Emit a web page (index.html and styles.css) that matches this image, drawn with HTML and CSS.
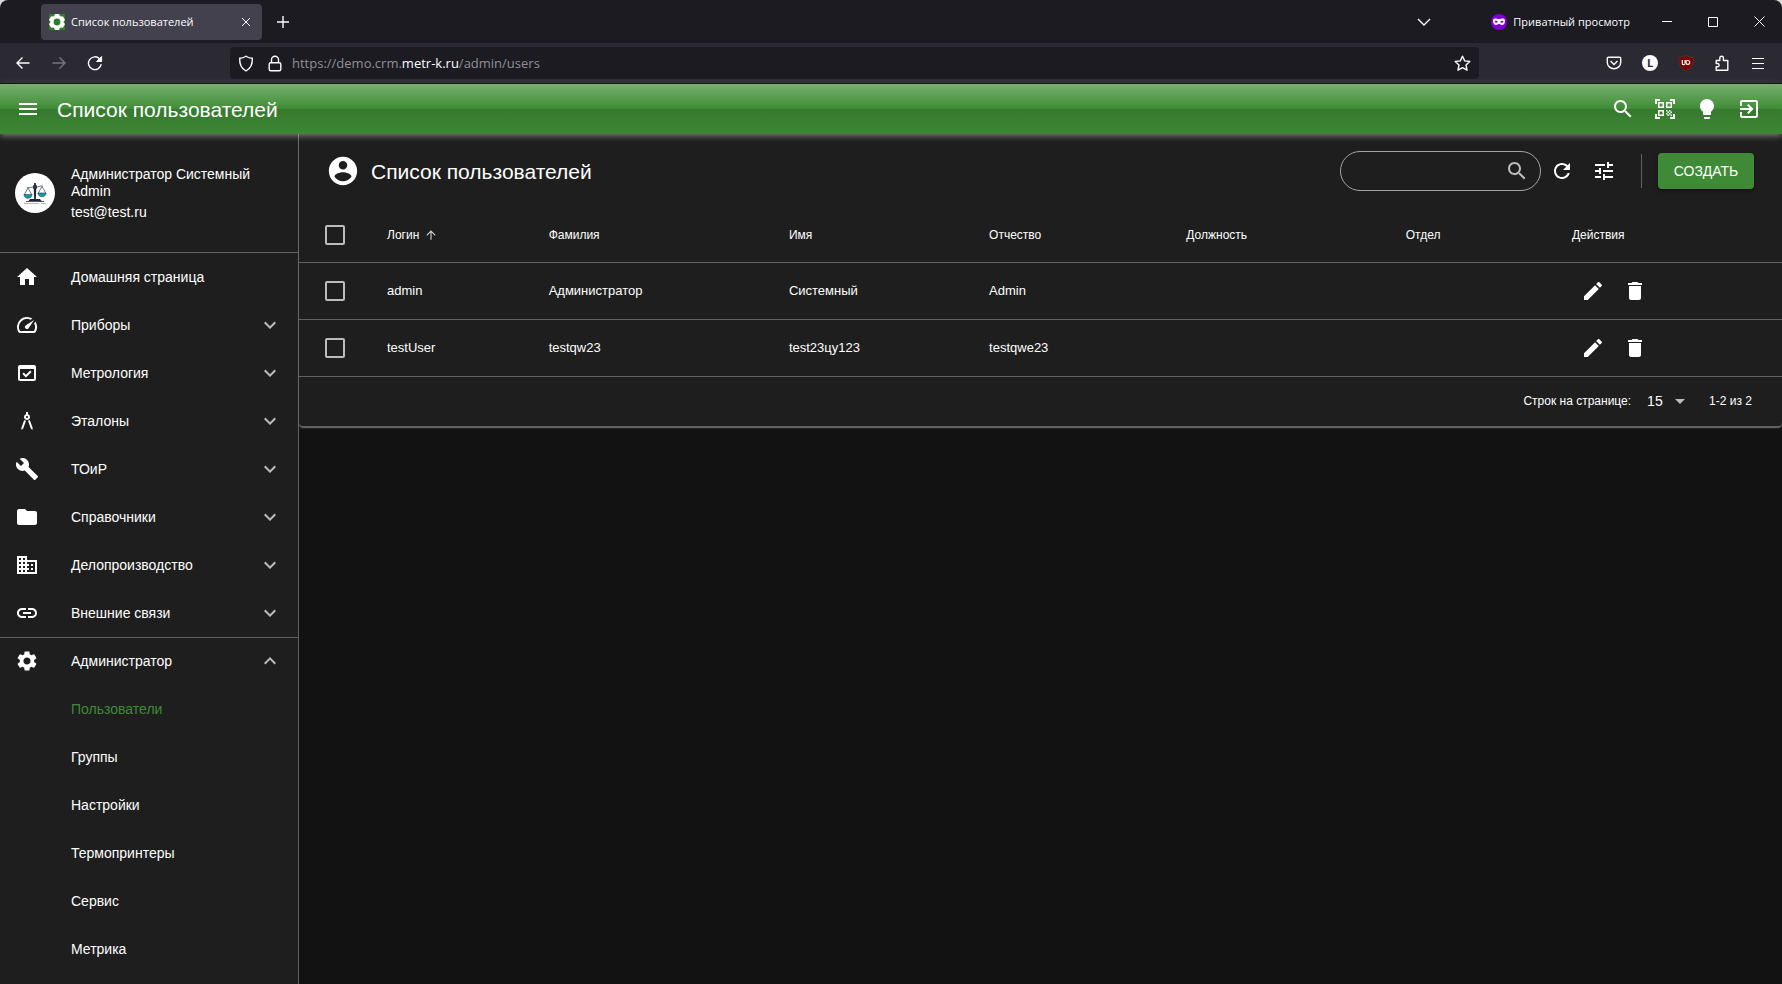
FILE: index.html
```html
<!DOCTYPE html>
<html lang="ru">
<head>
<meta charset="utf-8">
<title>Список пользователей</title>
<link rel="stylesheet" href="styles.css">
</head>
<body>
<svg class="sprite" aria-hidden="true">
  <symbol id="i-search" viewBox="0 0 24 24"><path d="M15.5 14h-.79l-.28-.27C15.41 12.59 16 11.11 16 9.5 16 5.91 13.09 3 9.5 3S3 5.91 3 9.5 5.91 16 9.5 16c1.61 0 3.09-.59 4.23-1.57l.27.28v.79l5 4.99L20.49 19l-4.99-5zm-6 0C7.01 14 5 11.99 5 9.5S7.01 5 9.5 5 14 7.01 14 9.5 11.99 14 9.5 14z"/></symbol>
  <symbol id="i-more" viewBox="0 0 24 24"><path d="M16.59 8.59L12 13.17 7.41 8.59 6 10l6 6 6-6z"/></symbol>
  <symbol id="i-less" viewBox="0 0 24 24"><path d="M12 8l-6 6 1.41 1.41L12 10.83l4.59 4.58L18 14z"/></symbol>
  <symbol id="i-edit" viewBox="0 0 24 24"><path d="M3 17.25V21h3.75L17.81 9.94l-3.75-3.75L3 17.25zM20.71 7.04c.39-.39.39-1.02 0-1.41l-2.34-2.34c-.39-.39-1.02-.39-1.41 0l-1.83 1.83 3.75 3.75 1.83-1.83z"/></symbol>
  <symbol id="i-delete" viewBox="0 0 24 24"><path d="M6 19c0 1.1.9 2 2 2h8c1.1 0 2-.9 2-2V7H6v12zM19 4h-3.5l-1-1h-5l-1 1H5v2h14V4z"/></symbol>
</svg>

<div class="browser">
  <div class="tabbar">
    <div class="tab">
      <svg class="favicon" viewBox="0 0 16 16"><rect width="16" height="16" fill="#2f7d2c"/><g fill="#fff"><circle cx="8" cy="8" r="6.8"/><rect x="5.500" y="0" width="5" height="16" rx="1"/><rect x="5.500" y="0" width="5" height="16" rx="1" transform="rotate(60 8 8)"/><rect x="5.500" y="0" width="5" height="16" rx="1" transform="rotate(120 8 8)"/></g><circle cx="8" cy="8" r="3.400" fill="#2f7d2c"/></svg>
      <span class="tab-title">Список пользователей</span>
      <button class="tab-close" aria-label="Закрыть вкладку"><svg class="line" width="10" height="10" viewBox="0 0 10 10"><path d="M1 1l8 8M9 1L1 9"/></svg></button>
    </div>
    <button class="chrome-btn" aria-label="Новая вкладка"><svg class="line bold" width="14" height="14" viewBox="0 0 14 14"><path d="M7 1v12M1 7h12"/></svg></button>
    <button class="chrome-btn tabs-list" aria-label="Список вкладок"><svg class="line bold" width="14" height="14" viewBox="0 0 14 14"><path d="M1 4L7 10 13 4"/></svg></button>
    <div class="private">
      <svg width="16" height="16" viewBox="0 0 16 16"><circle cx="8" cy="8" r="8" fill="#8000d7"/><path fill="#fff" fill-rule="evenodd" d="M2 6.500C2 5 3.500 4.500 5 4.600 6.500 4.700 7 5.300 8 5.300S9.500 4.700 11 4.600c1.500-.1 3 .4 3 1.900 0 2.500-1 4.500-3 4.500-1.500 0-2-1.300-3-1.300S6.500 11 5 11C3 11 2 9 2 6.500zM5.200 6.700C4.300 6.700 3.800 7.300 3.500 7.800c.5.600 1 .9 1.700.9.800 0 1.300-.5 1.500-1-.3-.6-.7-1-1.500-1zm5.600 0c-.8 0-1.200.4-1.500 1 .2.500.7 1 1.500 1 .7 0 1.200-.3 1.700-.9-.3-.5-.8-1.100-1.700-1.100z"/></svg>
      <span>Приватный просмотр</span>
    </div>
    <button class="win-btn" aria-label="Свернуть"><svg class="line" width="10" height="11" viewBox="0 0 10 11"><path d="M0 5.500h10"/></svg></button>
    <button class="win-btn" aria-label="Развернуть"><svg class="line" width="10" height="10" viewBox="0 0 10 10"><path d="M.5.5h9v9h-9z"/></svg></button>
    <button class="win-btn" aria-label="Закрыть"><svg class="line" width="11" height="11" viewBox="0 0 11 11"><path d="M.5.500l10 10M10.500.5l-10 10"/></svg></button>
  </div>
  <div class="toolbar">
    <button class="chrome-btn" aria-label="Назад"><svg class="line bold" width="16" height="16" viewBox="0 0 16 16"><path d="M14.500 8H2M7.500 2.500L2 8l5.500 5.500"/></svg></button>
    <button class="chrome-btn dim" aria-label="Вперёд"><svg class="line bold" width="16" height="16" viewBox="0 0 16 16"><path d="M1.500 8H14M8.500 2.500L14 8l-5.500 5.500"/></svg></button>
    <button class="chrome-btn" aria-label="Обновить"><svg class="line bold" width="16" height="16" viewBox="0 0 16 16"><path d="M14.200 9.200A6.400 6.400 0 1 1 12.600 3.900"/><path d="M14.600 1.500v5h-5z" fill="currentColor" stroke-width="1"/></svg></button>
    <div class="toolbar-gap"></div>
    <div class="urlbar">
      <svg class="line bold" width="16" height="17" viewBox="0 0 16 17"><path d="M8 1.200C6 2.600 4 3.200 1.700 3.300 1.400 9 3.200 13.500 8 16c4.800-2.500 6.600-7 6.300-12.700C12 3.200 10 2.600 8 1.200z"/></svg>
      <svg class="line bold" width="16" height="17" viewBox="0 0 16 17"><rect x="2.200" y="7.700" width="11.600" height="8" rx="1.500"/><path d="M4.500 7.500V4.700a3.500 3.500 0 0 1 7 0v2.800"/></svg>
      <span class="url">https://demo.crm.<b>metr-k.ru</b>/admin/users</span>
      <svg class="line bold" width="17" height="17" viewBox="0 0 17 17"><path stroke-linejoin="round" d="M8.500 1.200l2.200 4.700 5.100.6-3.800 3.500 1 5.200-4.500-2.600L4 15.200 5 10 1.200 6.500l5.100-.6z"/></svg>
    </div>
    <div class="toolbar-gap"></div>
    <button class="chrome-btn" aria-label="Pocket"><svg class="line bold" width="16" height="16" viewBox="0 0 16 16"><path d="M2.500 2.200h11a1.200 1.200 0 0 1 1.200 1.200V7.500a6.700 6.200 0 0 1-13.400 0V3.400A1.200 1.200 0 0 1 2.500 2.200z"/><path d="M4.500 6L8 9.400 11.500 6"/></svg></button>
    <button class="chrome-btn" aria-label="Расширение L"><span class="ext-l">L</span></button>
    <button class="chrome-btn" aria-label="uBlock Origin"><svg width="16" height="16" viewBox="0 0 16 16"><path fill="#800000" stroke="#5d3a3e" stroke-width=".6" d="M8 .4C6 1.700 3.500 2.300.700 2.300.6 9 2 13 8 15.700 14 13 15.400 9 15.300 2.300 12.500 2.300 10 1.700 8 .4z"/><path fill="none" stroke="#fff" stroke-width="1.200" d="M4.300 5v3.300a1.200 1.200 0 0 0 2.500.2M7.100 5v3"/><circle cx="9.800" cy="7.400" r="1.900" fill="none" stroke="#fff" stroke-width="1.200"/></svg></button>
    <button class="chrome-btn" aria-label="Расширения"><svg class="line bold" width="16" height="16" viewBox="0 0 16 16"><path stroke-linejoin="round" d="M2.200 5.500h3.600V3a1.800 1.800 0 0 1 3.600 0v2.500h4.400v9.700H2.200v-3.400h1.600a1.700 1.700 0 0 0 0-3.300H2.200z"/></svg></button>
    <button class="chrome-btn" aria-label="Меню"><svg class="line" width="12" height="12" viewBox="0 0 12 12"><path d="M0 1.500h12M0 6.500h12M0 11.500h12"/></svg></button>
  </div>
</div>

<header class="appbar">
  <button class="icon-btn" aria-label="Меню"><svg class="icon" viewBox="0 0 24 24"><path d="M3 18h18v-2H3v2zm0-5h18v-2H3v2zm0-7v2h18V6H3z"/></svg></button>
  <h1 class="title appbar-title">Список пользователей</h1>
  <button class="icon-btn" aria-label="Поиск"><svg class="icon"><use href="#i-search"/></svg></button>
  <button class="icon-btn" aria-label="Сканер"><svg class="icon" viewBox="0 0 24 24"><path d="M9.500 6.500v3h-3v-3h3M11 5H5v6h6V5zm-1.500 9.500v3h-3v-3h3M11 13H5v6h6v-6zm6.500-6.500v3h-3v-3h3M19 5h-6v6h6V5zm-6 8h1.500v1.500H13V13zm1.500 1.500H16V16h-1.500v-1.500zM16 13h1.500v1.500H16V13zm-3 3h1.500v1.500H13V16zm1.500 1.500H16V19h-1.500v-1.500zM16 16h1.500v1.500H16V16zm1.500-1.500H19V16h-1.500v-1.500zm0 3H19V19h-1.500v-1.500zM22 7h-2V4h-3V2h5v5zm0 15v-5h-2v3h-3v2h5zM2 22h5v-2H4v-3H2v5zM2 2v5h2V4h3V2H2z"/></svg></button>
  <button class="icon-btn" aria-label="Тема"><svg class="icon" viewBox="0 0 24 24"><path d="M9 21c0 .5.4 1 1 1h4c.6 0 1-.5 1-1v-1H9v1zm3-19C8.100 2 5 5.100 5 9c0 2.400 1.200 4.500 3 5.700V17c0 .5.4 1 1 1h6c.6 0 1-.5 1-1v-2.300c1.800-1.300 3-3.400 3-5.700 0-3.900-3.100-7-7-7z"/></svg></button>
  <button class="icon-btn" aria-label="Выход"><svg class="icon" viewBox="0 0 24 24"><path d="M10.090 15.590L11.500 17l5-5-5-5-1.410 1.410L12.670 11H3v2h9.670l-2.580 2.590zM19 3H5c-1.110 0-2 .9-2 2v4h2V5h14v14H5v-4H3v4c0 1.100.89 2 2 2h14c1.100 0 2-.9 2-2V5c0-1.100-.9-2-2-2z"/></svg></button>
</header>

<div class="layout">
  <aside class="sidebar">
    <div class="profile">
      <svg class="avatar" viewBox="0 0 40 40"><circle cx="20" cy="20" r="20" fill="#fff"/><path fill="#1b2a3d" d="M19.200 10h1.600l.5 5-.5 12h-1.600l-.5-12zM15 26h10l1.500 2h-13z"/><circle cx="20" cy="14" r="2.200" fill="#1b2a3d"/><path fill="none" stroke="#4a5563" stroke-width=".8" d="M12 14.500c3 .8 5-1 8-.5s5-1.500 8-1M13 15l-4 7M13 15l4 7M27 13.500l-4 7M27 13.500l4 7"/><path fill="#149a9c" stroke="#1b4a58" stroke-width=".6" d="M9 21.500h8c0 5-8 5-8 0zM23 20h8c0 5-8 5-8 0z"/><path fill="none" stroke="#555" stroke-width="1" d="M11 28.500h18"/><path stroke="#999" stroke-width=".7" d="M9 30.500h15M26 30.500h5"/></svg>
      <div class="profile-text">
        <p>Администратор Системный Admin</p>
        <p>test@test.ru</p>
      </div>
    </div>
    <nav class="nav">
      <a class="nav-item" href="#"><svg class="icon" viewBox="0 0 24 24"><path d="M10 20v-6h4v6h5v-8h3L12 3 2 12h3v8z"/></svg><span>Домашняя страница</span></a>
      <a class="nav-item" href="#"><svg class="icon" viewBox="0 0 24 24"><path d="M20.380 8.570l-1.230 1.850a8 8 0 0 1-.22 7.580H5.070A8 8 0 0 1 15.580 6.850l1.850-1.230A10 10 0 0 0 3.350 19a2 2 0 0 0 1.720 1h13.850a2 2 0 0 0 1.740-1 10 10 0 0 0-.27-10.440zm-9.790 6.840a2 2 0 0 0 2.830 0l5.660-8.490-8.490 5.660a2 2 0 0 0 0 2.830z"/></svg><span>Приборы</span><svg class="icon muted"><use href="#i-more"/></svg></a>
      <a class="nav-item" href="#"><svg class="icon" viewBox="0 0 24 24"><path d="M16.600 10.880l-1.420-1.420-4.240 4.250-2.120-2.130L7.400 13l3.540 3.540zM19 4H5c-1.110 0-2 .9-2 2v12c0 1.100.89 2 2 2h14c1.100 0 2-.9 2-2V6c0-1.100-.89-2-2-2zm0 14H5V8h14v10z"/></svg><span>Метрология</span><svg class="icon muted"><use href="#i-more"/></svg></a>
      <a class="nav-item" href="#"><svg class="icon" viewBox="0 0 24 24"><path d="M6.360 18.780L6.610 21l1.620-1.540 2.770-7.600c-.68-.17-1.280-.51-1.770-.98l-2.870 7.900zM14.770 10.880c-.49.47-1.100.81-1.770.98l2.770 7.600L17.390 21l.26-2.220-2.880-7.900zM15 8c0-1.300-.84-2.400-2-2.820V3h-2v2.180C9.840 5.600 9 6.700 9 8c0 1.660 1.340 3 3 3s3-1.340 3-3zm-3 1c-.55 0-1-.45-1-1s.45-1 1-1 1 .45 1 1-.45 1-1 1z"/></svg><span>Эталоны</span><svg class="icon muted"><use href="#i-more"/></svg></a>
      <a class="nav-item" href="#"><svg class="icon" viewBox="0 0 24 24"><path d="M22.700 19l-9.100-9.100c.9-2.300.4-5-1.500-6.900-2-2-5-2.400-7.400-1.300L9 6 6 9 1.600 4.700C.4 7.100.9 10.100 2.900 12.100c1.900 1.900 4.600 2.400 6.900 1.500l9.100 9.100c.4.4 1 .4 1.400 0l2.300-2.300c.5-.4.5-1.100.1-1.400z"/></svg><span>ТОиР</span><svg class="icon muted"><use href="#i-more"/></svg></a>
      <a class="nav-item" href="#"><svg class="icon" viewBox="0 0 24 24"><path d="M10 4H4c-1.100 0-1.990.9-1.990 2L2 18c0 1.100.9 2 2 2h16c1.100 0 2-.9 2-2V8c0-1.100-.9-2-2-2h-8l-2-2z"/></svg><span>Справочники</span><svg class="icon muted"><use href="#i-more"/></svg></a>
      <a class="nav-item" href="#"><svg class="icon" viewBox="0 0 24 24"><path d="M12 7V3H2v18h20V7H12zM6 19H4v-2h2v2zm0-4H4v-2h2v2zm0-4H4V9h2v2zm0-4H4V5h2v2zm4 12H8v-2h2v2zm0-4H8v-2h2v2zm0-4H8V9h2v2zm0-4H8V5h2v2zm10 12h-8v-2h2v-2h-2v-2h2v-2h-2V9h8v10zm-2-8h-2v2h2v-2zm0 4h-2v2h2v-2z"/></svg><span>Делопроизводство</span><svg class="icon muted"><use href="#i-more"/></svg></a>
      <a class="nav-item" href="#"><svg class="icon" viewBox="0 0 24 24"><path d="M3.900 12c0-1.710 1.390-3.100 3.100-3.100h4V7H7c-2.760 0-5 2.240-5 5s2.240 5 5 5h4v-1.900H7c-1.710 0-3.100-1.390-3.100-3.100zM8 13h8v-2H8v2zm9-6h-4v1.900h4c1.710 0 3.100 1.390 3.100 3.100s-1.390 3.100-3.100 3.100h-4V17h4c2.760 0 5-2.240 5-5s-2.240-5-5-5z"/></svg><span>Внешние связи</span><svg class="icon muted"><use href="#i-more"/></svg></a>
    </nav>
    <nav class="nav nav-admin">
      <a class="nav-item" href="#"><svg class="icon" viewBox="0 0 24 24"><path d="M19.140 12.940c.04-.3.06-.61.06-.94 0-.32-.02-.64-.07-.94l2.030-1.580c.18-.14.23-.41.12-.61l-1.920-3.320c-.12-.22-.37-.29-.59-.22l-2.390.96c-.5-.38-1.030-.7-1.620-.94l-.36-2.540c-.04-.24-.24-.41-.48-.41h-3.840c-.24 0-.43.17-.47.41l-.36 2.540c-.59.24-1.130.57-1.620.94l-2.390-.96c-.22-.08-.47 0-.59.22L2.740 8.870c-.12.21-.08.47.12.61l2.030 1.580c-.05.3-.09.63-.09.94s.02.64.07.94l-2.030 1.580c-.18.14-.23.41-.12.61l1.920 3.320c.12.22.37.29.59.22l2.390-.96c.5.38 1.030.7 1.620.94l.36 2.540c.05.24.24.41.48.41h3.840c.24 0 .44-.17.47-.41l.36-2.540c.59-.24 1.130-.56 1.620-.94l2.390.96c.22.08.47 0 .59-.22l1.920-3.320c.12-.22.07-.47-.12-.61l-2.010-1.580zM12 15.600c-1.980 0-3.600-1.620-3.600-3.600s1.620-3.600 3.600-3.600 3.600 1.620 3.600 3.600-1.620 3.600-3.600 3.600z"/></svg><span>Администратор</span><svg class="icon muted"><use href="#i-less"/></svg></a>
      <a class="nav-item nav-sub active" href="#">Пользователи</a>
      <a class="nav-item nav-sub" href="#">Группы</a>
      <a class="nav-item nav-sub" href="#">Настройки</a>
      <a class="nav-item nav-sub" href="#">Термопринтеры</a>
      <a class="nav-item nav-sub" href="#">Сервис</a>
      <a class="nav-item nav-sub" href="#">Метрика</a>
    </nav>
  </aside>

  <main class="content">
    <section class="paper">
      <div class="paper-head">
        <svg class="account" viewBox="0 0 24 24"><path d="M12 2C6.480 2 2 6.480 2 12s4.480 10 10 10 10-4.480 10-10S17.520 2 12 2zm0 3c1.660 0 3 1.340 3 3s-1.340 3-3 3-3-1.340-3-3 1.340-3 3-3zm0 14.200c-2.500 0-4.710-1.280-6-3.220.03-1.990 4-3.080 6-3.080 1.990 0 5.970 1.090 6 3.080-1.290 1.940-3.500 3.220-6 3.220z"/></svg>
        <h2 class="title paper-title">Список пользователей</h2>
        <label class="search"><input type="search" aria-label="Поиск"><svg class="icon muted"><use href="#i-search"/></svg></label>
        <button class="icon-btn" aria-label="Обновить"><svg class="icon" viewBox="0 0 24 24"><path d="M17.650 6.350C16.200 4.900 14.210 4 12 4c-4.420 0-7.990 3.580-7.990 8s3.570 8 7.990 8c3.730 0 6.840-2.550 7.730-6h-2.080c-.82 2.330-3.040 4-5.650 4-3.310 0-6-2.690-6-6s2.690-6 6-6c1.660 0 3.140.69 4.220 1.780L13 11h7V4l-2.350 2.350z"/></svg></button>
        <button class="icon-btn" aria-label="Фильтры"><svg class="icon" viewBox="0 0 24 24"><path d="M3 17v2h6v-2H3zM3 5v2h10V5H3zm10 16v-2h8v-2h-8v-2h-2v6h2zM7 9v2H3v2h4v2h2V9H7zm14 4v-2H11v2h10zm-6-4h2V7h4V5h-4V3h-2v6z"/></svg></button>
        <span class="divider"></span>
        <button class="create">СОЗДАТЬ</button>
      </div>
      <table class="users">
        <thead>
          <tr>
            <th class="c-check"><input type="checkbox" aria-label="Выбрать все"></th>
            <th class="c-login"><span class="sort">Логин <svg width="14" height="14" viewBox="0 0 24 24"><path d="M4 12l1.410 1.410L11 7.830V20h2V7.830l5.580 5.590L20 12l-8-8-8 8z"/></svg></span></th>
            <th class="c-last">Фамилия</th>
            <th class="c-first">Имя</th>
            <th class="c-middle">Отчество</th>
            <th class="c-post">Должность</th>
            <th class="c-dept">Отдел</th>
            <th class="c-actions">Действия</th>
          </tr>
        </thead>
        <tbody>
          <tr>
            <td class="c-check"><input type="checkbox" aria-label="Выбрать admin"></td>
            <td>admin</td><td>Администратор</td><td>Системный</td><td>Admin</td><td></td><td></td>
            <td><div class="actions"><button class="icon-btn" aria-label="Изменить"><svg class="icon"><use href="#i-edit"/></svg></button><button class="icon-btn" aria-label="Удалить"><svg class="icon"><use href="#i-delete"/></svg></button></div></td>
          </tr>
          <tr>
            <td class="c-check"><input type="checkbox" aria-label="Выбрать testUser"></td>
            <td>testUser</td><td>testqw23</td><td>test23цу123</td><td>testqwe23</td><td></td><td></td>
            <td><div class="actions"><button class="icon-btn" aria-label="Изменить"><svg class="icon"><use href="#i-edit"/></svg></button><button class="icon-btn" aria-label="Удалить"><svg class="icon"><use href="#i-delete"/></svg></button></div></td>
          </tr>
        </tbody>
      </table>
      <div class="pagination">
        <label for="rows">Строк на странице:</label>
        <span class="rows"><select id="rows"><option>15</option></select><svg width="10" height="5" viewBox="0 0 10 5"><path d="M0 0h10L5 5z"/></svg></span>
        <span>1-2 из 2</span>
      </div>
    </section>
  </main>
</div>
</body>
</html>
```

FILE: styles.css
```css
:root {
  --line: #616161;
  --surface: #1e1e1e;
  --green: #3f8a36;
  --muted: #bcbcbc;
}

* { box-sizing: border-box; }

body {
  margin: 0;
  min-height: 100vh;
  display: flex;
  flex-direction: column;
  background: #121212;
  color: #fff;
  font-family: "Liberation Sans", Arial, sans-serif;
  font-size: 14px;
}

p, h1, h2 { margin: 0; }
a { color: inherit; text-decoration: none; }

button {
  display: flex;
  align-items: center;
  justify-content: center;
  padding: 0;
  border: 0;
  background: none;
  color: inherit;
  font: inherit;
}

.sprite { display: none; }
.icon { width: 24px; height: 24px; flex: none; fill: currentColor; }
.muted { color: var(--muted); }
.title { padding-top: 2px; font-size: 21px; font-weight: 400; line-height: 28px; }

/* Browser window */
.browser {
  background: #d8d8d8;
  color: #fbfbfe;
  font-family: "Open Sans", "Noto Sans", sans-serif;
  font-size: 11px;
}
.line { fill: none; stroke: currentColor; stroke-width: 1; flex: none; }
.line.bold { stroke-width: 1.4; }
.tabbar {
  display: flex;
  align-items: center;
  height: 43px;
  padding-left: 41px;
  border-radius: 8px 8px 0 0;
  background: #1c1b22;
}
.tab {
  display: flex;
  align-items: center;
  width: 221px;
  height: 36px;
  padding: 0 4px 0 8px;
  border-radius: 4px;
  background: #42414d;
}
.favicon { width: 16px; height: 16px; flex: none; }
.tab-title { flex: 1; margin-left: 6px; white-space: nowrap; }
.tab-close { width: 24px; height: 24px; }
.chrome-btn { width: 36px; height: 36px; flex: none; }
.tabbar > .chrome-btn { margin-left: 3px; }
.tabbar > .tabs-list { margin-left: auto; }
.dim { color: #77767e; }
.private {
  display: flex;
  align-items: center;
  gap: 6px;
  margin: 0 14px 0 49px;
  white-space: nowrap;
}
.win-btn { width: 46px; height: 40px; flex: none; }
.toolbar {
  display: flex;
  align-items: center;
  height: 41px;
  padding: 0 6px 0 5px;
  background: #2b2a33;
  border-bottom: 1px solid #0c0c0d;
}
.toolbar-gap { flex: 117; }
.urlbar {
  flex: 1233;
  display: flex;
  align-items: center;
  gap: 13px;
  height: 32px;
  padding: 0 8px;
  border-radius: 4px;
  background: #1c1b22;
}
.url { flex: 1; margin-left: -4px; color: #8f8f97; font-size: 13px; }
.url b { color: #fbfbfe; font-weight: 400; }
.ext-l {
  width: 16px;
  height: 16px;
  border-radius: 50%;
  background: #fbfbfe;
  color: #2b2a33;
  font-size: 11px;
  font-weight: 700;
  line-height: 16px;
}

/* Application bar */
.appbar {
  position: relative;
  z-index: 1;
  display: flex;
  align-items: center;
  height: 50px;
  padding: 0 12px 0 7px;
  background: linear-gradient(#76b06f, #3f8c36 50%, #37792f 50%, #3d8634);
  box-shadow: 0 2px 4px -1px rgba(255, 255, 255, .2), 0 4px 5px rgba(255, 255, 255, .14), 0 1px 10px rgba(255, 255, 255, .12);
}
.appbar-title { flex: 1; margin-left: 8px; }
.icon-btn { width: 42px; height: 42px; flex: none; }

.layout { flex: 1; display: flex; }

/* Sidebar */
.sidebar {
  width: 299px;
  flex: none;
  border-right: 1px solid var(--line);
  background: var(--surface);
}
.profile {
  display: flex;
  align-items: center;
  gap: 16px;
  height: 119px;
  padding: 0 32px 0 15px;
  border-bottom: 1px solid var(--line);
}
.avatar { width: 40px; height: 40px; flex: none; }
.profile-text { display: grid; gap: 4px; line-height: 17px; }
.nav-item {
  display: flex;
  align-items: center;
  height: 48px;
  padding: 0 16px 0 15px;
}
.nav-item span { flex: 1; margin-left: 32px; }
.nav-admin { box-shadow: inset 0 1px var(--line); }
.nav-sub { padding-left: 71px; }
.nav-sub.active { color: var(--green); }

/* Users list */
.content { flex: 1; min-width: 0; }
.paper {
  border-bottom: 1px solid var(--line);
  border-radius: 0 0 4px 4px;
  background: var(--surface);
  box-shadow: 0 2px 1px -1px rgba(255, 255, 255, .2), 0 1px 1px rgba(255, 255, 255, .14), 0 1px 3px rgba(255, 255, 255, .12);
}
.paper-head {
  display: flex;
  align-items: center;
  height: 74px;
  padding: 0 28px 0 27px;
}
.account { width: 34px; height: 34px; fill: #fff; }
.paper-title { flex: 1; margin-left: 11px; }
.search {
  display: flex;
  align-items: center;
  width: 201px;
  height: 40px;
  padding: 0 11px 0 16px;
  border: 1px solid #a5a5a5;
  border-radius: 20px;
}
.search input {
  flex: 1;
  min-width: 0;
  border: 0;
  outline: 0;
  background: none;
  color: inherit;
  font: inherit;
}
.divider { width: 1px; height: 34px; margin: 0 16px; background: var(--line); }
.create {
  width: 96px;
  height: 36px;
  border-radius: 4px;
  background: var(--green);
  box-shadow: 0 2px 4px rgba(0, 0, 0, .4);
}

.users {
  width: 100%;
  border-collapse: collapse;
  table-layout: fixed;
  font-size: 13px;
}
.users th, .users td {
  height: 57px;
  padding: 0 16px;
  border-bottom: 1px solid var(--line);
  text-align: left;
}
.users th { height: 54px; font-size: 12px; font-weight: 400; }
.users .c-check { width: 72px; padding: 0 0 0 26px; }
.c-login { width: 10.900%; }
.c-last { width: 16.200%; }
.c-first { width: 13.500%; }
.c-middle { width: 13.300%; }
.c-post { width: 14.800%; }
.c-dept { width: 11.200%; }
.users input {
  display: block;
  appearance: none;
  width: 20px;
  height: 20px;
  margin: 0;
  border: 2px solid var(--muted);
  border-radius: 2px;
}
.sort { display: flex; align-items: center; gap: 5px; }
.sort svg { fill: #c8d0d4; }
.actions { display: flex; }

.pagination {
  display: flex;
  align-items: center;
  justify-content: flex-end;
  height: 49px;
  padding-right: 30px;
  font-size: 12px;
}
.rows { display: flex; align-items: center; margin: 0 24px 0 16px; }
.rows select {
  appearance: none;
  width: 28px;
  padding: 0;
  border: 0;
  background: none;
  color: #fff;
  font: inherit;
  font-size: 14px;
}
.rows svg { fill: var(--muted); }
```
